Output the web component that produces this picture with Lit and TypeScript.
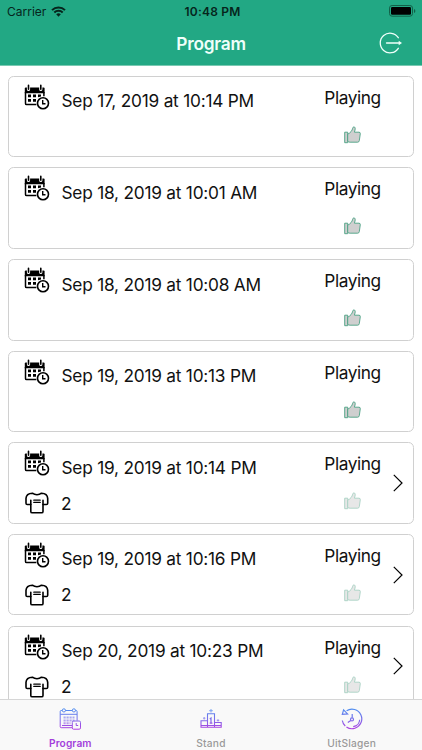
import { LitElement, html, css, svg } from "lit";
import { customElement, property } from "lit/decorators.js";

const calendarIcon = html`<svg width="26" height="26" viewBox="0 0 26 26" fill="none">
  <path d="M.8 4.500q0-1 1-1h17.800q1 0 1 1v4.700H.8z" fill="#000"/>
  <path d="M1.500 8v11.400q0 1.100 1.100 1.100h9.800M19.900 8v4.200" stroke="#000" stroke-width="1.500"/>
  <path d="M4.500 1v4.400M16.800 1v4.400" stroke="#fff" stroke-width="3.200" stroke-linecap="round"/>
  <path d="M4.500 1.300v3.900M16.800 1.300v3.900" stroke="#000" stroke-width="1.600" stroke-linecap="round"/>
  <path d="M4 10.600h3v2.700H4zM9 10.600h3v2.700H9zM14 10.600h3v2l-3 .7zM4 15.100h3v2.700H4zM9 15.100h3v2.700H9z" fill="#000"/>
  <circle cx="19" cy="19.200" r="5.500" fill="#fff" stroke="#000" stroke-width="1.600"/>
  <path d="M18.700 16v3.700h2.800" stroke="#000" stroke-width="1.400"/>
</svg>`;

const shirtIcon = html`<svg width="24" height="22" viewBox="0 0 24 22" fill="none" stroke="#000" stroke-width="1.600" stroke-linejoin="round" stroke-linecap="round">
  <path d="M7.400 1.200C4 1.300 1.200 2.800 1 6.400v4.800q0 1.300 1.200 1.300h3.600v6.900q0 1.400 1.400 1.400h9.400q1.400 0 1.400-1.400v-6.900h3.400q1.300 0 1.300-1.300V6.400C22.500 2.800 19.900 1.300 16.500 1.200C14 3.200 10 3.200 7.400 1.200z"/>
  <path d="M5.800 8.200v4.300M18 8.200v4.300"/>
  <path d="M8.800 8.200h6.400M8.800 10.400h6.400" stroke-width="1.300"/>
</svg>`;

const thumbIcon = html`<svg width="17" height="18" viewBox="0 0 17 18" fill="#cfcfcf" stroke="#4ba283" stroke-width=".9" stroke-linejoin="round">
  <path d="M.7 6.200h3v10.500h-3z"/>
  <path d="M3.700 8.200C6.500 6.800 8.100 4.800 8.700 2.200Q9 .9 9.800.9c1.500 0 1.600 1.500 1.200 3.100L10.400 6.200h4.600q1.500.1 1.300 1.500l-1 6.900q-.2 1.600-1.700 1.600H6.100q-1.200 0-2.400-.8z"/>
</svg>`;

const chevronIcon = html`<svg width="10" height="18" viewBox="0 0 10 18" fill="none" stroke="#000" stroke-width="1.200"><path d="M.8.900L9 9L.8 17.100"/></svg>`;

const gradient = (id: string) => svg`<defs><linearGradient id=${id} x1="0" y1="0" x2="0" y2="22" gradientUnits="userSpaceOnUse">
  <stop offset="0" stop-color="#4d91f0"/><stop offset=".5" stop-color="#7a70ea"/><stop offset="1" stop-color="#b43be0"/>
</linearGradient></defs>`;

const tabIcons = [
  html`<svg width="22" height="22" viewBox="0 0 22 22" fill="none" stroke="url(#g1)" stroke-width="1">${gradient("g1")}
    <path d="M3.300 2.500H2.200q-1 0-1 1v15.200q0 1 1 1h11M6.400 2.500h7M16.500 2.500h.6q1 0 1 1v9.200M1.200 6.300h16.900M3 17.500h10"/>
    <circle cx="4.900" cy="2.400" r="1.600"/><circle cx="14.900" cy="2.400" r="1.600"/>
    <path d="M4.500 9.500h11M4.500 12.500h11M4.500 15.300h7" stroke-width="1.900" stroke-dasharray="2.200 .8" opacity=".6"/>
    <rect x="13.300" y="13" width="8.200" height="8.200" rx="1.300"/><path d="M17.200 15v2.500h2"/>
  </svg>`,
  html`<svg width="22" height="22" viewBox="0 0 22 22" fill="none" stroke="url(#g2)" stroke-width="1.100">${gradient("g2")}
    <path d="M7.500 19.300V5.800h7v13.500M7.500 12.700H1v6.600h20.200v-4.800h-6.700M1 17.500h20.200"/>
    <path d="M9.800 10.900l1.200-.9v5M9.700 15.100h2.700" stroke-width="1.200"/>
    <path d="M11 1v3.600M9.300 2.600h3.400M4.200 9v2.400M3 10.200h2.400M18 11.200v2.400M16.800 12.400h2.400" opacity=".7"/>
  </svg>`,
  html`<svg width="22" height="22" viewBox="0 0 22 22" fill="none" stroke="url(#g3)" stroke-width="1.200">${gradient("g3")}
    <path d="M5.600 2.700A9.800 9.800 0 1 1 1.300 12.500" stroke-dasharray="42 1.500 20"/>
    <path d="M1.300 6.400l1.300-4.600 4 4.100z"/>
    <path d="M12.200 18.600a7.300 7.300 0 0 0 6.500-6.800"/>
    <circle cx="11" cy="11.400" r="1.500"/><path d="M11.200 9.800V6M9.800 12.400l-3 2.200"/>
  </svg>`,
];

@customElement("match-card")
class MatchCard extends LitElement {
  @property() date = "";
  @property() count = "";
  static styles = css`
    :host { display: block; flex: none; }
    .card { box-sizing: border-box; height: 81.500px; border: 1.400px solid #d0d0d0; border-radius: 5.500px; background: #fff; display: flex; padding: 0 10.500px 0 15px; }
    .details { flex: 1; display: flex; flex-direction: column; padding-top: 7px; }
    .row { display: flex; height: 26px; }
    .row + .row { margin-top: 16px; height: 22px; padding-left: 1px; }
    svg { display: block; flex: none; }
    .text { font-size: 17.300px; line-height: 22px; color: #111; white-space: nowrap; }
    .date { margin: 6.500px 0 0 11.500px; letter-spacing: -.23px; }
    .count { margin: .500px 0 0 12px; }
    .status { width: 58px; display: flex; flex-direction: column; align-items: center; padding-top: 10px; }
    .status svg { margin-top: 17px; }
    .status .text { letter-spacing: -.42px; }
    .faded { opacity: .48; }
    .arrow { width: 18px; display: flex; align-items: center; justify-content: flex-end; margin-left: 3px; }
  `;
  render() {
    return html`<div class="card">
      <div class="details">
        <div class="row">${calendarIcon}<span class="text date">${this.date}</span></div>
        ${this.count ? html`<div class="row">${shirtIcon}<span class="text count">${this.count}</span></div>` : ""}
      </div>
      <div class="status"><span class="text">Playing</span><div class=${this.count ? "faded" : ""}>${thumbIcon}</div></div>
      <div class="arrow">${this.count ? chevronIcon : ""}</div>
    </div>`;
  }
}

@customElement("app-root")
class AppRoot extends LitElement {
  static styles = css`
    :host { display: flex; flex-direction: column; height: 750px; width: 422px; overflow: hidden; background: #fff; font-family: Inter, "Liberation Sans", sans-serif; }
    svg { display: block; }
    header { flex: none; height: 66px; box-sizing: border-box; background: #22a884; border-bottom: 1px solid #79c9b2; }
    .system { height: 22px; display: grid; grid-template-columns: 1fr auto 1fr; align-items: center; padding: 0 6px 0 7px; font-size: 12px; color: #06251c; }
    .carrier { display: flex; align-items: center; gap: 5px; letter-spacing: 0; }
    .time { font-weight: 600; letter-spacing: .2px; padding-left: 2px; }
    .battery { justify-self: end; }
    .nav { height: 42px; display: grid; grid-template-columns: 1fr auto 1fr; align-items: center; padding: 0 19px; }
    .title { grid-column: 2; color: #effffa; font-size: 17.300px; font-weight: 600; letter-spacing: -.25px; }
    .exit { justify-self: end; }
    main { flex: 1; min-height: 0; overflow: hidden; display: flex; flex-direction: column; gap: 10.170px; padding: 9.700px 8px 0; }
    footer { flex: none; height: 51px; box-sizing: border-box; border-top: 1px solid #d6d6d6; background: #f9f9f9; display: grid; grid-template-columns: repeat(3, 1fr); }
    .tab { display: flex; flex-direction: column; align-items: center; padding-top: 8px; font-size: 10.200px; line-height: 13px; font-weight: 500; color: #999; letter-spacing: .2px; gap: 6.500px; }
    .active { color: #a33fdb; font-weight: 600; letter-spacing: .1px; }
  `;
  render() {
    const games = [
      ["Sep 17, 2019 at 10:14 PM", ""], ["Sep 18, 2019 at 10:01 AM", ""],
      ["Sep 18, 2019 at 10:08 AM", ""], ["Sep 19, 2019 at 10:13 PM", ""],
      ["Sep 19, 2019 at 10:14 PM", "2"], ["Sep 19, 2019 at 10:16 PM", "2"],
      ["Sep 20, 2019 at 10:23 PM", "2"],
    ];
    return html`
      <header>
        <div class="system">
          <div class="carrier">Carrier
            <svg width="15" height="11" viewBox="0 0 15 11" fill="none" stroke="#06251c" stroke-width="2"><path d="M1 4.100a9.200 9.200 0 0 1 13 0M3.300 6.500a6 6 0 0 1 8.400 0"/><path d="M5.200 8.300a3.300 3.300 0 0 1 4.600 0L7.500 10.700z" fill="#06251c" stroke="none"/></svg>
          </div>
          <span class="time">10:48 PM</span>
          <svg class="battery" width="27" height="12" viewBox="0 0 27 12"><rect x=".5" y=".5" width="23" height="10.700" rx="2.600" fill="none" stroke="#126048"/><rect x="2" y="2" width="20" height="7.700" rx="1.200"/><path d="M25 4v4q1.400-.6 1.400-2T25 4" fill="#126048"/></svg>
        </div>
        <div class="nav">
          <span class="title">Program</span>
          <svg class="exit" width="24" height="22" viewBox="0 0 24 22" fill="none" stroke="#effffa" stroke-width="1.300"><path d="M19.300 5.700A9.800 9.800 0 1 0 19.300 16.300M7.500 11h13" stroke-linecap="round"/><path d="M19.700 8.800L23 11l-3.300 2.200z" fill="#effffa" stroke="none"/></svg>
        </div>
      </header>
      <main>${games.map(([date, count]) => html`<match-card .date=${date} .count=${count}></match-card>`)}</main>
      <footer>
        ${["Program", "Stand", "UitSlagen"].map((name, i) => html`<div class="tab ${i === 0 ? "active" : ""}">${tabIcons[i]}<span>${name}</span></div>`)}
      </footer>`;
  }
}
